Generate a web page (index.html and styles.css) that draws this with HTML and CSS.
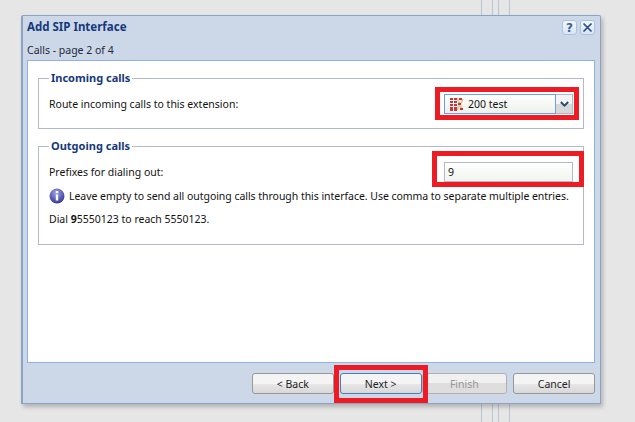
FILE: index.html
```html
<!DOCTYPE html>
<html lang="en">
<head>
<meta charset="utf-8">
<title>Add SIP Interface</title>
<link rel="stylesheet" href="styles.css">
</head>
<body>
<div class="wires"><i></i><i></i></div>
<div class="window">
  <div class="titlebar">
    <span class="title">Add SIP Interface</span>
    <div class="tools">
      <span class="tool help">?</span>
      <span class="tool"><svg width="11" height="11" viewBox="0 0 11 11"><path d="M1.500 1.500l8 8M9.500 1.500l-8 8" stroke="#2b4a8c" stroke-width="1.700" fill="none"/></svg></span>
    </div>
  </div>
  <div class="subtitle">Calls - page 2 of 4</div>
  <div class="panel">
    <fieldset class="group incoming">
      <legend>Incoming calls</legend>
      <div class="row">
        <span>Route incoming calls to this extension:</span>
        <div class="select marked">
          <div class="select-value">
            <svg class="ext-icon" width="14" height="14" viewBox="0 0 14 14"><path d="M7 1l5.500 12M13 2L7 13" stroke="#d9cda8" stroke-width="2" fill="none"/><g fill="#c9333a"><rect x="0" y="1" width="3" height="2"/><rect x="4" y="1" width="3" height="2"/><rect x="9" y="1" width="3" height="2"/><rect x="0" y="4" width="3" height="2"/><rect x="4" y="4" width="3" height="2"/><rect x="0" y="7" width="3" height="2"/><rect x="4" y="7" width="3" height="2"/><rect x="8" y="6" width="3" height="2"/><rect x="0" y="10" width="3" height="2"/><rect x="4" y="10" width="3" height="2"/><rect x="0" y="12" width="3" height="2"/><rect x="4" y="12" width="3" height="2"/><rect x="10" y="11" width="3" height="2"/></g></svg>
            <span>200 test</span>
          </div>
          <div class="select-arrow"><svg width="9" height="6" viewBox="0 0 11 7"><path d="M1 1l4.500 4.500L10 1" stroke="#2c4a78" stroke-width="2.400" fill="none"/></svg></div>
        </div>
      </div>
    </fieldset>
    <fieldset class="group outgoing">
      <legend>Outgoing calls</legend>
      <div class="row">
        <span>Prefixes for dialing out:</span>
        <div class="textbox marked">9</div>
      </div>
      <div class="note">
        <svg class="info" width="16" height="16" viewBox="0 0 16 16"><defs><radialGradient id="orb" cx="45%" cy="30%" r="75%"><stop offset="0" stop-color="#a0a4ea"/><stop offset="1" stop-color="#2c2f8e"/></radialGradient></defs><circle cx="8" cy="8" r="7.500" fill="url(#orb)"/><rect x="6.800" y="3" width="2.400" height="2.200" fill="#fff"/><rect x="6.800" y="6.500" width="2.400" height="6" fill="#fff"/></svg>
        <span class="note-text">Leave empty to send all outgoing calls through this interface. Use comma to separate multiple entries.</span>
      </div>
      <p class="hint">Dial <b>9</b>5550123 to reach 5550123.</p>
    </fieldset>
  </div>
  <div class="footer">
    <button class="btn">&lt; Back</button>
    <button class="btn default marked">Next &gt;</button>
    <button class="btn disabled">Finish</button>
    <button class="btn cancel">Cancel</button>
  </div>
</div>
</body>
</html>
```
FILE: styles.css
```css
* { box-sizing: border-box; }
html, body { margin: 0; height: 422px; overflow: hidden; }
body {
  position: relative;
  background: #e6e6e6;
  padding: 15px 0 0 21px;
  font: 10.500px/14px "Noto Sans", "DejaVu Sans", sans-serif;
  color: #111;
}
.wires {
  position: absolute;
  left: 481px;
  top: 0;
  width: 29px;
  height: 422px;
  display: flex;
  justify-content: space-between;
}
.wires i {
  display: block;
  width: 12px;
  border-left: 1px solid #bcc4d4;
  border-right: 1px solid #bcc4d4;
}
.window {
  position: relative;
  width: 580px;
  height: 389px;
  background: #ccd8e8;
  border: 1px solid #8aa4c8;
  border-left-width: 2px;
  border-radius: 2px 2px 0 0;
  box-shadow: 2px 3px 4px rgba(0, 0, 0, .22);
  padding: 0 5px 0 4px;
  display: flex;
  flex-direction: column;
}
.titlebar {
  height: 22px;
  display: flex;
  align-items: center;
  justify-content: space-between;
}
.title { font-weight: 700; font-size: 11.500px; color: #15397c; }
.tools { display: flex; gap: 3px; margin-top: 1px; }
.tool {
  width: 15px;
  height: 15px;
  border: 1px solid #a8c4e4;
  border-radius: 3px;
  background: linear-gradient(#f4f8fd, #d8e4f3);
  display: flex;
  align-items: center;
  justify-content: center;
}
.help { font: 700 12px/12px "DejaVu Sans", sans-serif; color: #3f6294; }
.subtitle { height: 22px; padding-top: 5px; color: #1b2a3c; }
.panel {
  width: 568px;
  height: 303px;
  background: #fff;
  border: 1px solid #8eb2e2;
  padding: 10px 10px 0;
  display: flex;
  flex-direction: column;
  gap: 10px;
}
.group {
  margin: 0;
  min-width: 0;
  border: 1px solid #b4b8cc;
  padding: 0 10px;
}
.incoming { height: 58px; }
.outgoing { height: 106px; }
legend {
  margin-left: 0;
  padding: 0 2px;
  font-weight: 700;
  font-size: 11px;
  color: #15397c;
}
.row {
  display: flex;
  align-items: center;
  justify-content: space-between;
  height: 20px;
  margin-top: 9px;
}
.select { width: 129px; height: 20px; display: flex; }
.select-value {
  width: 112px;
  border: 1px solid #6d9eea;
  background: linear-gradient(#fff, #eef1ea);
  display: flex;
  align-items: center;
  gap: 4px;
  padding-left: 5px;
  color: #111;
}
.select-arrow {
  width: 17px;
  border: 1px solid #b4b8cc;
  border-left: 0;
  background: linear-gradient(#f4f4f4 50%, #d8d8d8 50%);
  display: flex;
  align-items: center;
  justify-content: center;
}
.textbox {
  width: 129px;
  height: 20px;
  border: 1px solid #b4b8cc;
  background: linear-gradient(#fff, #f1f4ee);
  padding: 2px 3px;
}
.note {
  display: flex;
  align-items: center;
  gap: 4px;
  height: 16px;
  margin-top: 6px;
  white-space: nowrap;
}
.note-text { letter-spacing: -0.04px; }
.info { flex: none; }
.hint { margin: 8px 0 0; }
.hint b { font-weight: 700; }
.footer {
  flex: 1;
  display: flex;
  align-items: flex-start;
  padding-top: 10px;
  width: 568px;
}
.btn {
  width: 82px;
  height: 21px;
  padding: 0;
  font: inherit;
  color: #222;
  background: linear-gradient(#f4f4f4 50%, #e8e8e8 50%, #d8d8d8);
  border: 1px solid #989898;
  border-radius: 3px;
  margin-left: 6px;
}
.btn:first-child { margin-left: 225px; }
.btn.default { border-color: #4c7cb8; }
.btn.disabled { margin-left: 0; width: 86px; color: #999; border-color: #b0b0b0; background: linear-gradient(#f0f0f0 50%, #dedede 50%); }
.marked { position: relative; }
.marked::after {
  content: "";
  position: absolute;
  box-sizing: border-box;
  border: 5px solid #ed1c24;
  pointer-events: none;
}
.select.marked::after { left: -9px; top: -7px; width: 144px; height: 33px; }
.textbox.marked::after { left: -13px; top: -12px; width: 152px; height: 36px; }
.btn.marked::after { left: -7px; top: -9px; width: 94px; height: 38px; }
```
